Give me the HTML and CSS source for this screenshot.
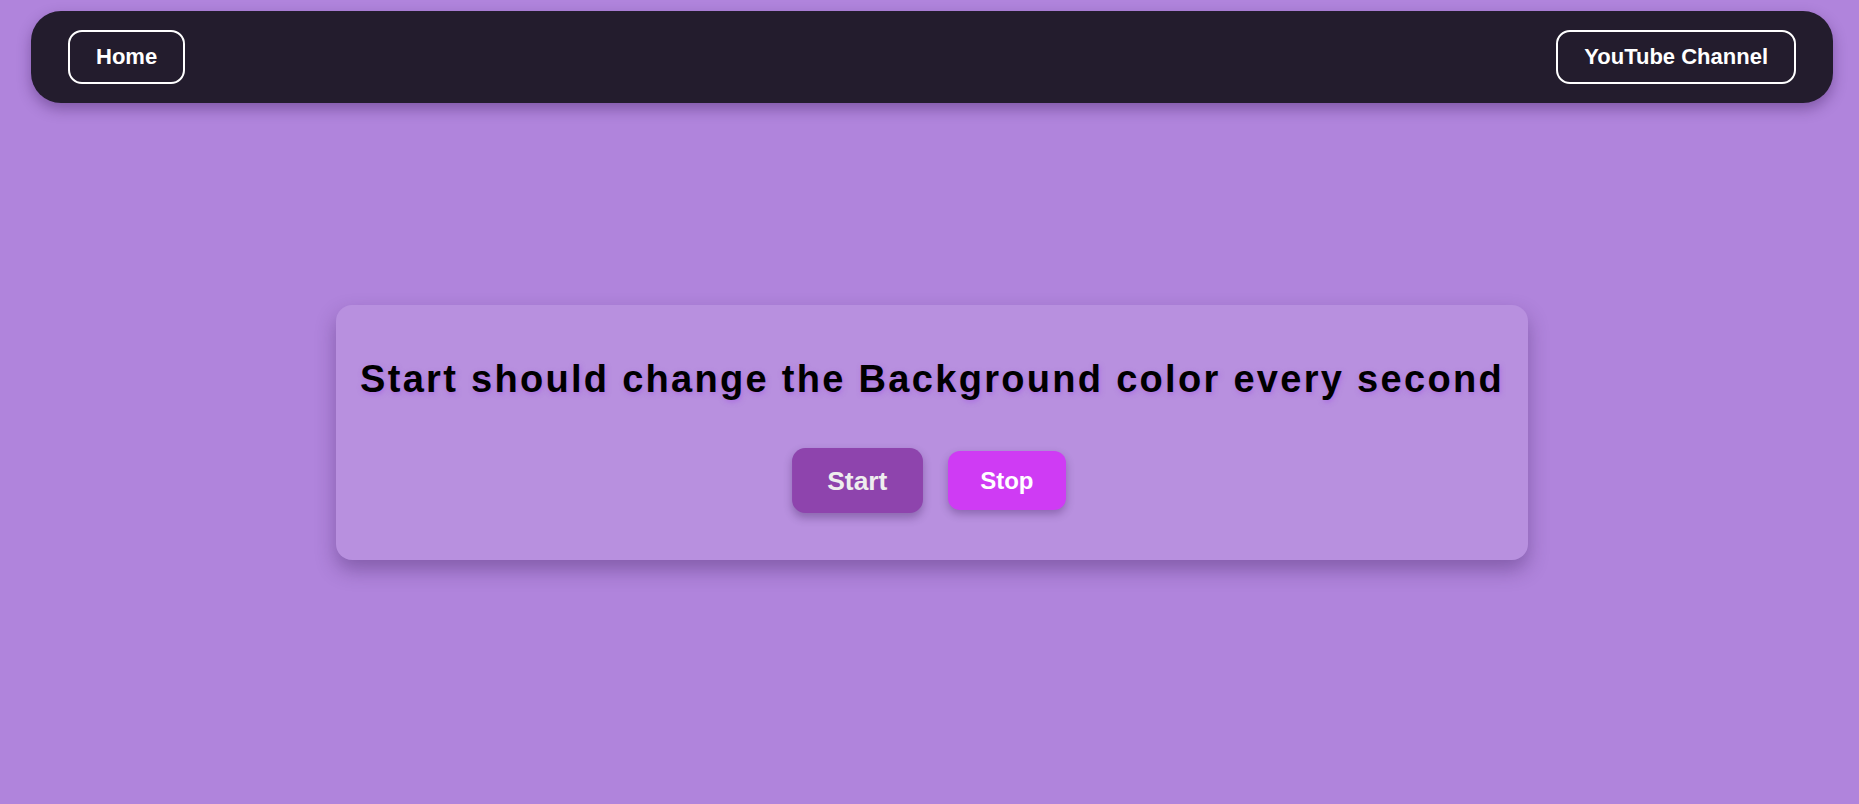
FILE: index.html
```html
<!DOCTYPE html>
<html lang="en">
<head>
<meta charset="utf-8">
<title>Background Changer</title>
<link rel="stylesheet" href="styles.css">
</head>
<body>
  <nav class="navbar">
    <a class="nav-btn" href="#">Home</a>
    <a class="nav-btn" href="#">YouTube Channel</a>
  </nav>
  <main class="main">
    <section class="card">
      <h1 class="title">Start should change the Background color every second</h1>
      <div class="actions">
        <button class="btn btn-start">Start</button>
        <button class="btn btn-stop">Stop</button>
      </div>
    </section>
  </main>
</body>
</html>
```

FILE: styles.css
```css
* { box-sizing: border-box; }

html, body {
  margin: 0;
  padding: 0;
}

body {
  background: #b084dc;
  font-family: "Liberation Sans", Arial, sans-serif;
  min-height: 100vh;
  overflow: hidden;
}

.navbar {
  margin: 11px 26px 0 31px;
  height: 92px;
  padding: 0 37px;
  display: flex;
  justify-content: space-between;
  align-items: center;
  background: #231c2d;
  border-radius: 30px;
  box-shadow: 0 6px 14px rgba(40, 10, 70, 0.35);
}

.nav-btn {
  display: inline-block;
  color: #ffffff;
  text-decoration: none;
  font-weight: bold;
  font-size: 22px;
  line-height: 26px;
  padding: 12px 26px;
  border: 2px solid #ffffff;
  border-radius: 14px;
}

.main {
  display: flex;
  justify-content: center;
  padding: 202px 0 0 5px;
}

.card {
  width: 1192px;
  padding: 52px 20px 50px;
  background: rgba(255, 255, 255, 0.1);
  border-radius: 16px;
  box-shadow: 0 10px 20px rgba(50, 20, 80, 0.35);
  text-align: center;
}

.title {
  margin: 0 0 50px;
  font-size: 38px;
  line-height: 44px;
  font-weight: bold;
  letter-spacing: 2.3px;
  color: #000000;
  text-shadow: 1px 2px 5px rgba(160, 80, 230, 0.5);
}

.actions {
  display: flex;
  justify-content: center;
  gap: 31px;
}

.btn {
  font-family: "Liberation Sans", Arial, sans-serif;
  font-weight: bold;
  font-size: 24px;
  line-height: 27px;
  padding: 16px 32px;
  border: none;
  border-radius: 12px;
  color: #ffffff;
  box-shadow: 0 4px 8px rgba(40, 10, 70, 0.3);
  cursor: pointer;
}

.btn-start {
  background: #8e44ad;
  color: #eeeeee;
  transform: scale(1.1);
}

.btn-stop {
  background: #cf3bf4;
}
```
